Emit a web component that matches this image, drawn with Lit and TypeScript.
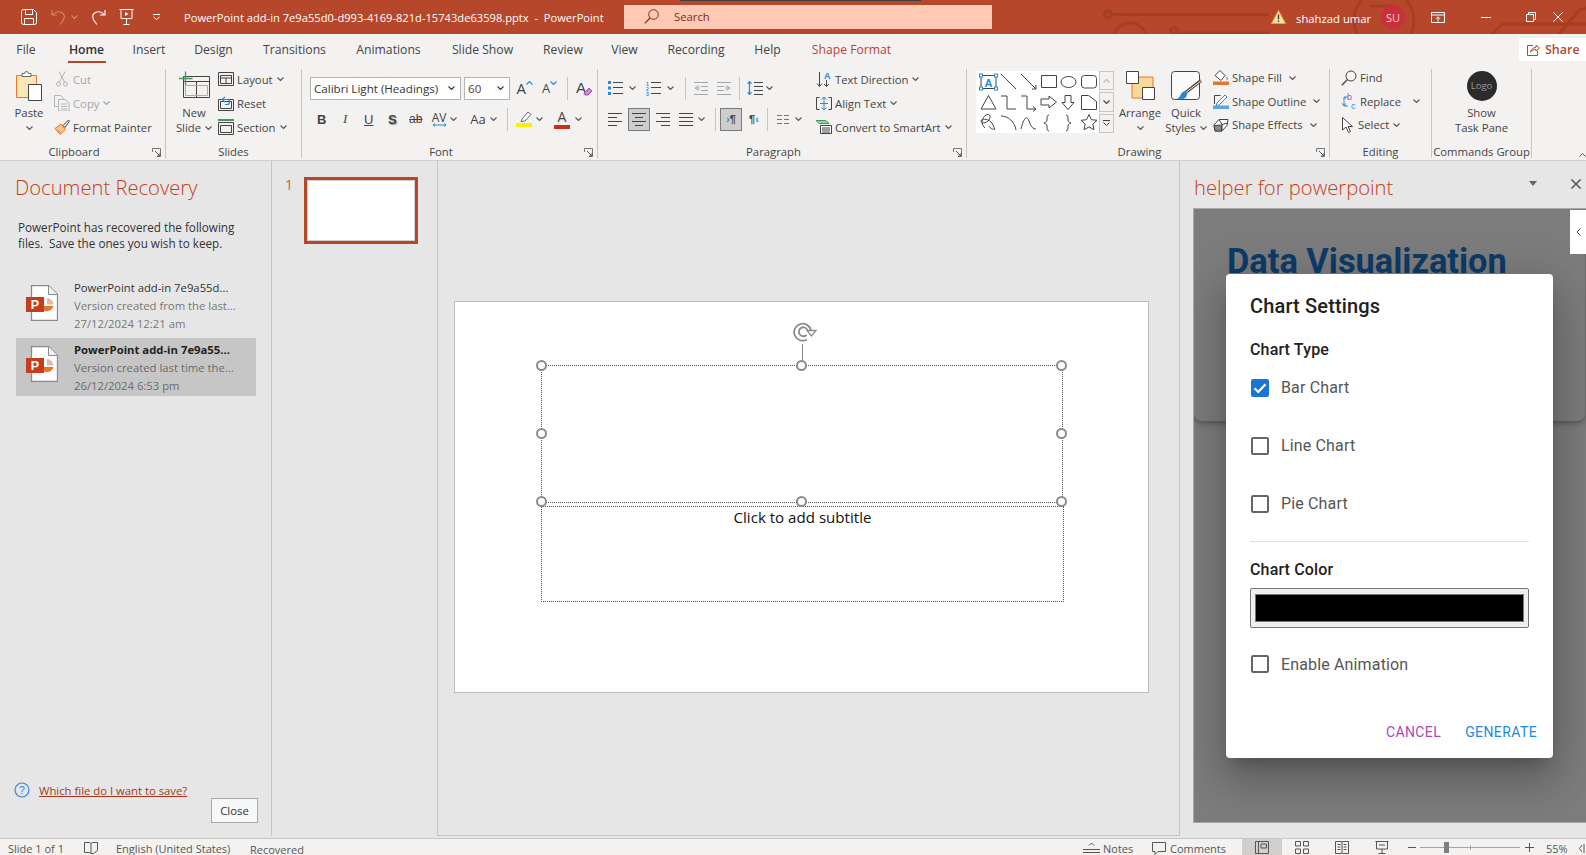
import { LitElement, css, html, svg } from 'lit'
import { customElement } from 'lit/decorators.js'

const ink = '#444'
const blue = '#2b88d8'
const orange = '#e3782b'

const ico = (w: number, h: number, body: unknown) =>
  html`<svg class="ico" width=${w} height=${h} viewBox="0 0 ${w} ${h}" fill="none">${body}</svg>`

const chev = (c = '#555') =>
  ico(7, 4, svg`<path d="M.5.5 3.5 3.5 6.5.5" stroke=${c} stroke-width="1.1"/>`)

const lines = (rows: [number, number, number][], c = ink) =>
  rows.map(([x1, x2, y]) => svg`<path d="M${x1} ${y}.5H${x2}" stroke=${c}/>`)

// title bar
const icSave = ico(16, 16, svg`<path d="M.5 2.5a2 2 0 0 1 2-2h10l3 3v10a2 2 0 0 1-2 2h-11a2 2 0 0 1-2-2zM4.5.5v5h7v-5M3.5 15.5v-6h9v6" stroke="#fff"/>`)
const icUndo = ico(15, 16, svg`<path d="M1 1v5h5M1.5 6C4 2.5 9 1.5 12 4.5c2.5 2.5 1.5 6-3 11" stroke="#d9856a" stroke-width="1.1"/>`)
const icRedo = ico(15, 16, svg`<path d="M14 1v5H9M13.5 6C11 2.5 6 1.5 3 4.5c-2.5 2.5-1.5 6 3 11" stroke="#fff" stroke-width="1.1"/>`)
const icPresent = ico(15, 16, svg`<path d="M.5.5h14M2 .5v9h11v-9M7.5 9.5v6M4.5 15.5h6" stroke="#fff"/><path d="M6 3l3.5 2L6 7z" fill="#fff"/>`)
const icCustom = ico(7, 6, svg`<path d="M0 .5h7M.5 3 3.5 5.5 6.5 3" stroke="#fff"/>`)
const icSearch = ico(15, 15, svg`<circle cx="9.5" cy="5.5" r="4.8" stroke="#8a2a14"/><path d="M6 9 .8 14.3" stroke="#8a2a14" stroke-width="1.2"/>`)
const icWarn = ico(15, 14, svg`<path d="M7.5.5 14.5 13.5H.5z" fill="#f9e3a0" stroke="#e8a33c"/><path d="M7.5 4.5v5" stroke="#444" stroke-width="1.4"/><path d="M7.5 10.5v1.6" stroke="#444" stroke-width="1.4"/>`)
const icDisplay = ico(14, 11, svg`<path d="M.5.5h13v10H.5zM.5 3h13M7 9.5V5M5 6.8 7 4.8l2 2" stroke="#fff"/>`)
const icMin = ico(10, 1, svg`<path d="M0 .5h10" stroke="#fff"/>`)
const icRestore = ico(10, 10, svg`<path d="M.5 2.5h7v7h-7zM2.5 2.5v-2h7v7h-2" stroke="#fff"/>`)
const icClose = ico(10, 10, svg`<path d="M.3.3l9.4 9.4M9.7.3.3 9.7" stroke="#fff"/>`)
const icShare = ico(13, 13, svg`<path d="M6 2.5H.5v10h10V8" stroke="#b7472a"/><path d="M3.5 9c.5-3 3-4.5 5.5-4.5V2L12.5 5 9 8V6.5c-2.5 0-4 .8-5.5 2.5z" stroke="#b7472a"/>`)

// clipboard
const icPaste = ico(28, 31, svg`<path d="M1.5 4.5h20v22h-20z" fill="#fbe6b8" stroke=${orange}/><path d="M7 4.5V2.5h2.5a2 2 0 0 1 4 0H16v3H7z" fill="#fff" stroke="#666"/><path d="M13.5 13.5h13v16h-13z" fill="#fff" stroke="#444"/>`)
const icCut = ico(16, 16, svg`<g stroke="#b3b3b3"><path d="M5 .5 10.5 11M11 .5 5.5 11"/><circle cx="4.5" cy="13" r="2"/><circle cx="11.5" cy="13" r="2"/></g>`)
const icCopy = ico(16, 16, svg`<g stroke="#b3b3b3"><path d="M.5.5h6l3 3v1M.5.5v11h3"/><path d="M4.5 4.5h7l3.5 3.5v8h-10.500z"/><path d="M7 9h6M7 11.5h6M7 14h6"/></g>`)
const icPainter = ico(16, 16, svg`<path d="M1 9.5 7 5l4.5 5.5L6 15.5z" fill="#f6c48f" stroke=${orange}/><path d="M3.5 11l3 3" stroke=${orange}/><path d="M9 6.5 14.5 1l1 1L11 8.5z" fill="#fff" stroke="#444"/>`)

// slides
const icNew = ico(31, 27, svg`<path d="M4.5 5.5h26v21h-26zM4.5 10.5h26M17.5 10.5v16" stroke="#444"/><path d="M6.5 14.5h22v10h-22z" stroke="#aaa"/><path d="M0 7.5h13.5M6.5 .5v13.5" stroke="#3e9a5a" stroke-width="1.3"/>`)
const icLayout = ico(16, 14, svg`<path d="M.5.5h15v13H.5zM2.5 3.5h11v8h-11zM2.5 6h11M8 6v5.5" stroke="#444"/>`)
const icReset = ico(16, 15, svg`<path d="M.5 3.5h15v11H.5zM2.5 5.5h11v7h-11z" stroke="#444"/><path d="M7 1 4 3.5 7 6M4 3.5h5a2.5 2.5 0 0 1 0 5H7" stroke=${blue} stroke-width="1.2"/>`)
const icSection = ico(16, 16, svg`<path d="M.5 3.5h15v12H.5zM2.5 6.5h11v7h-11z" stroke="#444"/><path d="M0 1h16" stroke="#3e9a5a" stroke-width="2"/>`)

// paragraph
const icBullets = ico(15, 14, svg`<g fill=${blue}><rect y="0" width="3" height="3"/><rect y="5.5" width="3" height="3"/><rect y="11" width="3" height="3"/></g>${lines([[5, 15, 1], [5, 15, 6], [5, 15, 12]])}`)
const icNumbers = ico(15, 15, svg`<text x="0" y="5" font-size="5" font-family="Liberation Sans" fill=${blue} font-weight="700">1</text><text x="0" y="10" font-size="5" font-family="Liberation Sans" fill=${blue} font-weight="700">2</text><text x="0" y="15" font-size="5" font-family="Liberation Sans" fill=${blue} font-weight="700">3</text>${lines([[5, 15, 1], [5, 15, 6], [5, 15, 12]])}`)
const icOut = ico(14, 13, svg`${lines([[0, 14, 0], [7, 14, 4], [7, 14, 8], [0, 14, 12]], '#a6a6a6')}<path d="M5 3.5 1 6l4 2.5M1 6h5" stroke="#a6a6a6"/>`)
const icIn = ico(14, 13, svg`${lines([[0, 14, 0], [0, 7, 4], [0, 7, 8], [0, 14, 12]], '#a6a6a6')}<path d="M9 3.5 13 6l-4 2.5M13 6H8" stroke="#a6a6a6"/>`)
const icSpacing = ico(16, 14, svg`<path d="M2.5 1v12M.5 3 2.5 .5l2 2.5M.5 11l2 2.5 2-2.5" stroke=${blue} stroke-width="1.2"/>${lines([[7, 16, 1], [7, 16, 5], [7, 16, 9], [7, 16, 13]])}`)
const icLeft = ico(14, 13, svg`${lines([[0, 14, 0], [0, 9, 4], [0, 14, 8], [0, 9, 12]])}`)
const icCenter = ico(14, 13, svg`${lines([[0, 14, 0], [3, 11, 4], [0, 14, 8], [3, 11, 12]])}`)
const icRight = ico(14, 13, svg`${lines([[0, 14, 0], [5, 14, 4], [0, 14, 8], [5, 14, 12]])}`)
const icJustify = ico(14, 13, svg`${lines([[0, 14, 0], [0, 14, 4], [0, 14, 8], [0, 14, 12]])}`)
const icCols = ico(12, 9, svg`${lines([[0, 5, 0], [7, 12, 0], [0, 5, 4], [7, 12, 4], [0, 5, 8], [7, 12, 8]], blue)}`)
const icDir = ico(16, 16, svg`<path d="M3.5 1v14M1 12.5l2.5 3 2.5-3M10.5 9v6.5M8 13l2.5 2.5L13 13" stroke="#444"/><text x="8" y="8" font-size="9" font-weight="700" font-family="Liberation Sans" fill=${blue}>A</text>`)
const icAlignText = ico(16, 15, svg`<path d="M3.5 1.5H.5v12h3M12.5 1.5h3v12h-3" stroke="#444"/><path d="M8 1v13M5.5 3.5 8 1l2.5 2.5M5.5 11.5 8 14l2.5-2.5M4 7.5h8" stroke=${blue}/>`)
const icSmart = ico(16, 14, svg`<path d="M0 .5h10l3 3H3z" fill="#9ccfa8" stroke="#3e9a5a"/><path d="M4.5 5.5h11v8h-11z" fill="#fff" stroke="#444"/><path d="M6 8h8M6 10h8M6 12h8" stroke="#444"/>`)

// drawing
const gallery = ico(123, 62, svg`
  <g stroke="#444" fill="none">
    <rect x="5" y="4.5" width="15" height="13" stroke=${ink}/>
    <path d="M25 3 40 18M45 3l15 15M60 18v-4M60 18h-4M65.5 4.5h15v12h-15z"/>
    <ellipse cx="92.5" cy="11" rx="7.5" ry="5.5"/>
    <rect x="105.5" y="4.5" width="15" height="12.5" rx="3"/>
    <path d="M12.5 24.5 20 38H5zM25 25h6v13h9M45 25h6v13h9M60 38l-3-2.5M60 38l-3 2.5M65 28h8v-3l7.5 6L73 37v-3h-8zM89 24.5h6v7h3l-6 7-6-7h3zM105.5 24.500h7l8 6v8h-15z"/>
    <path d="M9 57c-4-3-4-10 1-13 4-2 6 2 2 6-2 2-7 3-7 0 0-2 6-3 10 1 2 2 3 6 4 7-2 1-5-1-6-3M25 45c7 0 14 6 15 14M45 58c3-12 6-14 8-8s4 8 7 8M73 44c-2 0-2 2-2 5s-3 2-3 3 3 0 3 3 0 5 2 5M90 44c2 0 2 2 2 5s3 2 3 3-3 0-3 3 0 5-2 5" />
    <path d="M113 43.5l2.4 5.2 5.6.6-4.2 3.8 1.2 5.6-5-2.8-5 2.8 1.2-5.6-4.2-3.8 5.6-.6z"/>
  </g>
  <g fill="#fff" stroke=${blue}>
    <rect x="3.5" y="3" width="3" height="3"/><rect x="18.5" y="3" width="3" height="3"/><rect x="3.5" y="16" width="3" height="3"/><rect x="18.5" y="16" width="3" height="3"/>
  </g>
  <text x="8.5" y="15.5" font-size="11" font-weight="700" font-family="Liberation Sans" fill=${blue}>A</text>
`)
const scUp = ico(7, 4, svg`<path d="M.5 3.5 3.5.5l3 3" stroke="#bbb" stroke-width="1.2"/>`)
const scMore = ico(7, 6, svg`<path d="M0 .5h7M.5 2.5l3 3 3-3" stroke="#444"/>`)
const icArrange = ico(29, 29, svg`<path d="M6 6h21v21H6z" fill="#f6d998" stroke=${orange}/><path d="M.5.5h12v12H.5zM16.5 16.5h12v12h-12z" fill="#fff" stroke="#444"/>`)
const icQuick = ico(31, 31, svg`<rect x=".5" y=".5" width="28" height="28" rx="3" fill="#fafafa" stroke="#444"/><path d="M30 9.5 14 22" stroke="#444" stroke-width="3"/><path d="M30.5 9.5 14 22" stroke="#f3f2f1"/><path d="M14 20c-3 .5-4 3-5 5-1 2-2.5 2.5-3 3 4 1.5 10 0 10-5z" fill=${blue}/>`)
const icFill = ico(16, 15, svg`<path d="M2 5.5 7 .5l5 5-4 5z" fill="#fff" stroke="#444"/><path d="M13.5 7c1 1.5 1.5 2.5 0 3" stroke=${blue}/><rect y="11.5" width="16" height="3.5" fill=${orange}/>`)
const icOutline = ico(16, 15, svg`<path d="M1.5 10V1.5h6" stroke="#444"/><path d="M4 9l8-8 2 2-8 8-3 .5z" fill="#fff" stroke=${blue}/><rect y="11.5" width="16" height="3.5" fill="#5ca5dd"/>`)
const icEffects = ico(16, 14, svg`<path d="M1 7 6 1.5h9l-1 6L9 13H2z" fill="#fff" stroke="#444"/><path d="M6 1.5 9 6.5 15 5M9 6.5 9 13" stroke="#444"/><path d="M1 7.5 8.5 7 8.5 13H2z" fill="#8a8a8a" stroke="#444"/>`)
const icFind = ico(16, 16, svg`<circle cx="10" cy="6" r="5" stroke="#444"/><path d="M6.5 9.5.8 15.2" stroke="#444" stroke-width="1.3"/>`)
const icReplace = ico(16, 17, svg`<text x="6" y="7" font-size="9" fill="#a24ec1" font-family="Liberation Sans">b</text><text x="10" y="16" font-size="9" fill=${blue} font-family="Liberation Sans">c</text><path d="M7 4H3v9M7 13H3M1 10.5 3 13l2-2.5M5 6 3 4" stroke=${blue}/>`)
const icSelect = ico(14, 16, svg`<path d="M1.5 .5v12.500l3.500-3 2.500 5.500 2-1-2.500-5h4.500z" fill="#fff" stroke="#444"/>`)
const launch = ico(9, 9, svg`<path d="M.5 4V.5h8v8H5" stroke="#777"/><path d="M3 3l5 5M8 5v3H5" stroke="#555"/>`)

// panes and status
const pptFile = ico(32, 36, svg`
  <path d="M5.5.5h17l9 9v26h-26z" fill="#fff" stroke="#8a8a8a" stroke-width="1.3"/>
  <path d="M22.5.5v9h9" fill="#f0f0f0" stroke="#8a8a8a"/>
  <path d="M21 13a7 7 0 0 1 6.5 6.5H21z" fill="#e8b8a4"/><path d="M27.5 21a7 7 0 0 1-13.5 0z" fill=${orange}/>
  <rect y="12" width="18" height="15" fill="#c43e1c"/>
  <text x="9" y="24" font-size="12.5" font-weight="700" text-anchor="middle" fill="#fff" font-family="Liberation Sans">P</text>
`)
const icHelp = ico(16, 16, svg`<circle cx="8" cy="8" r="7" stroke=${blue} stroke-width="1.2"/><text x="8" y="12" font-size="10.5" text-anchor="middle" fill=${blue} font-family="Liberation Sans">?</text>`)
const icBook = ico(14, 12, svg`<path d="M.5.5h5l1.5 1 1.5-1h5v8l-4 3H7l-1.500-1H.5zM7 1.5V11" stroke="#555"/>`)
const icNotes = ico(17, 12, svg`<path d="M0 7.5h17M0 10.5h17" stroke="#555"/><path d="M6 3.5 8.5 1 11 3.5" stroke="#555"/>`)
const icComment = ico(14, 13, svg`<path d="M.5.5h13v9H6l-3 3v-3H.5z" stroke="#555"/>`)
const icNormal = ico(14, 13, svg`<path d="M.5.5h13v12H.5zM3.5.5v12M6 3h5.500v4H6z" stroke="#555"/>`)
const icGrid = ico(14, 13, svg`<path d="M.5.5h5v4.500h-5zM8.5.5h5v4.500h-5zM.5 8h5v4.500h-5zM8.5 8h5v4.500h-5z" stroke="#555"/>`)
const icRead = ico(14, 13, svg`<path d="M.5.5h6l.5 1 .5-1h6v12h-6l-.5-1-.5 1h-6zM7 1.5v10M2.5 3.5h3M2.5 6h3M2.5 8.5h3M8.5 3.5h3M8.5 6h3M8.5 8.5h3" stroke="#555"/>`)
const icShow = ico(14, 13, svg`<path d="M.5.5h13M1.5.5v7.500h11V.5M7 8v4.500M3.5 12.5h7M4 4h6" stroke="#555"/>`)
const icCheck = ico(18, 18, svg`<path d="M3.5 9.2 7.3 13l7.2-7.8" stroke="#fff" stroke-width="2.2"/>`)
const icRotate = ico(24, 22, svg`<path d="M14 18.5a8.500 8.500 0 1 1 4-9" stroke="#8c8c8c" stroke-width="1.8"/><path d="M13.5 14a4.500 4.500 0 1 1 1-5" stroke="#8c8c8c" stroke-width="1.8"/><path d="M14 9.5h9L18.5 15z" fill="#fff" stroke="#8c8c8c" stroke-width="1.3"/>`)

@customElement('app-root')
export class AppRoot extends LitElement {
  static styles = css`
    :host {
      display: block;
      position: relative;
      width: 1586px;
      height: 855px;
      overflow: hidden;
      background: #e6e6e6;
      font-family: 'Open Sans', 'Noto Sans', sans-serif;
      font-size: 11.3px;
      color: #444;
    }
    .ico { display: block; flex: none; }

    /* title bar */
    .title {
      position: relative;
      height: 34px;
      background: #b7472a;
      color: #fff;
      display: flex;
      align-items: center;
      white-space: nowrap;
    }
    .circuit { position: absolute; inset: 0; }
    .title > div, .title > span { position: relative; }
    .strip { position: absolute !important; left: 680px; top: 0; width: 241px; height: 1px; background: #3c3c3c; }
    .qat { display: flex; align-items: center; margin-left: 21px; width: 163px; }
    .qat .undo { margin-left: 14px; }
    .qat .uc { margin-left: 5px; }
    .qat .redo { margin-left: 13px; }
    .qat .pres { margin-left: 13px; }
    .qat .cust { margin-left: 19px; }
    .doc { width: 440px; font-size: 11.15px; }
    .search {
      width: 368px;
      height: 24px;
      background: #ffc9b3;
      color: #7d2b18;
      display: flex;
      align-items: center;
      gap: 15px;
      padding-left: 20px;
      padding-bottom: 1px;
      box-sizing: border-box;
    }
    .who { position: absolute !important; right: 0; top: 0; height: 34px; display: flex; align-items: center; }
    .who .name { margin: 3px 0 0 10px; width: 85px; }
    .avatar {
      width: 24px; height: 24px; border-radius: 50%;
      background: #c9303c; color: #f6d7d2;
      display: flex; align-items: center; justify-content: center;
      font-size: 11px; margin-right: 10px;
    }
    .who .wb { width: 45px; display: flex; justify-content: center; }
    .who .wb.first { margin-right: 3px; }
    .who .wb:last-child { width: 29px; justify-content: flex-start; margin-right: 4px; }

    /* ribbon */
    .ribbon { height: 127px; background: #f3f2f1; border-bottom: 1px solid #d2d0ce; box-sizing: border-box; position: relative; }
    .tabs { height: 28px; display: flex; justify-content: space-between; }
    .tablist {
      display: grid;
      grid-template-columns: 52px 69px 56px 73px 89px 99px 89px 72px 51px 92px 51px 117px;
      font-size: 12.2px;
    }
    .tablist span { display: flex; align-items: center; justify-content: center; padding-top: 3px; position: relative; }
    .tablist .on { font-weight: 600; color: #333; }
    .tablist .on::after { content: ''; position: absolute; left: 16px; right: 15px; bottom: -1px; height: 2.5px; background: #b7472a; }
    .tablist .ctx { color: #b7472a; }
    .share {
      margin-top: 4px; width: 67px; height: 23px; background: #fff;
      display: flex; align-items: center; gap: 5px; padding-left: 8px; box-sizing: border-box;
      color: #b7472a; font-size: 12.5px; font-weight: 600;
    }
    .groups { display: flex; margin-top: 7px; }
    .group { height: 89px; border-right: 1px solid #c8c6c4; box-sizing: border-box; position: relative; flex: none; }
    .g-clip { width: 166px; } .g-slides { width: 136px; } .g-font { width: 296px; }
    .g-para { width: 369px; } .g-draw { width: 363px; } .g-edit { width: 102px; } .g-cmd { width: 100px; }
    .body { height: 74px; display: flex; margin-top: -2px; }
    .label { text-align: center; line-height: 22px; white-space: nowrap; position: relative; color: #444; }
    .label.ln { padding-right: 17px; }
    .launch { position: absolute; right: 4px; top: 7px; }
    .col { display: flex; flex-direction: column; }
    .row { height: 24px; display: flex; align-items: center; gap: 3px; white-space: nowrap; }
    .row .cv { margin-left: 1px; }
    .off { color: #a6a6a6; }
    .large { display: flex; flex-direction: column; align-items: center; flex: none; line-height: 15.5px; white-space: nowrap; }
    .large .top { height: 37.5px; padding-top: 4px; box-sizing: border-box; }
    .large .cvline { height: 15.5px; display: flex; align-items: center; gap: 4px; }
    .clip-l { width: 32px; margin-left: 13px; }
    .clip-s { margin-left: 9px; }
    .new-l { width: 44px; margin-left: 6px; }
    .slides-s { margin-left: 2px; }

    /* font + paragraph two line blocks */
    .tworows { padding-top: 9.5px; display: flex; flex-direction: column; gap: 7.5px; }
    .r { display: flex; align-items: center; height: 24px; white-space: nowrap; }
    .r.first { height: 23px; }
    .combo {
      height: 23px; background: #fff; border: 1px solid #b4b4b4; box-sizing: border-box;
      display: flex; align-items: center; justify-content: space-between; padding: 0 5px 0 3px; color: #333; font-size: 11.6px;
    }
    .c-name { width: 151px; margin-left: 8px; }
    .c-size { width: 46px; margin-left: 3px; color: #5a4030; }
    .sep { width: 1px; height: 23px; background: #c8c6c4; flex: none; }
    .a { font-size: 15px; color: #444; display: flex; align-items: flex-start; line-height: 20px; }
    .a.small { font-size: 13px; align-items: flex-start; }
    .caret { margin-top: 3px; }
    .fb { width: 23.5px; text-align: center; font-size: 13px; flex: none; font-family: 'Liberation Sans', sans-serif; }
    .fb.b { font-weight: 700; }
    .fb.i { font-style: italic; font-family: 'Liberation Serif', serif; }
    .fb.u { text-decoration: underline; }
    .fb.s { font-weight: 700; text-shadow: 1px 1px 1px #999; }
    .fb.ab { text-decoration: line-through; font-size: 12px; }
    .av { width: 33px; display: flex; align-items: center; justify-content: center; gap: 3px; flex: none; }
    .av .t { font-size: 12px; display: flex; flex-direction: column; align-items: center; line-height: 11px; }
    .aa { width: 34px; margin-left: 6px; display: flex; align-items: center; justify-content: center; gap: 4px; flex: none; font-size: 13px; }
    .colorbtn { width: 16px; height: 20px; display: flex; flex-direction: column; align-items: center; }
    .colorbtn i { display: block; width: 16px; height: 4px; flex: none; }
    .colorbtn .yellow { background: #ffee00; }
    .colorbtn .red { background: #c9301a; }
    .colorbtn span { font-size: 14px; line-height: 16px; }
    .hi { width: 22px; height: 23px; background: #cdcdcd; border: 1px solid #7a7a7a; box-sizing: border-box; display: flex; align-items: center; justify-content: center; flex: none; }
    .pil { font-size: 11px; font-weight: 700; font-family: 'Liberation Sans', sans-serif; white-space: nowrap; }
    .pil b { color: #2b88d8; }
    .cv6 { margin-left: 6px; } .cv3 { margin-left: 3px; } .cv5 { margin-left: 5px; }
    .ml4 { margin-left: 4px; } .ml5 { margin-left: 5.5px; } .ml6 { margin-left: 6.5px; } .ml7 { margin-left: 7px; }
    .ml8 { margin-left: 8px; } .ml9 { margin-left: 9px; } .ml10 { margin-left: 10px; } .ml11 { margin-left: 11px; }
    .para-l { width: 218px; flex: none; }
    .draw-gal { margin: 4px 0 0 9px; display: flex; flex: none; height: 62px; }
    .gal { width: 123px; height: 62px; background: #fff; }
    .scroll { width: 15px; display: flex; flex-direction: column; gap: 2px; }
    .scroll div { flex: 1; background: #f3f2f1; border: 1px solid #c8c6c4; display: flex; align-items: center; justify-content: center; }
    .arr-l { width: 46px; margin-left: 3px; }
    .qs-l { width: 46px; }
    .shape-s { margin-left: 4px; margin-top: -1px; }
    .shape-s .row { height: 23.5px; }
    .shape-s .cv { margin-left: 4px; }
    .edit-s { margin-left: 11px; margin-top: -1px; }
    .edit-s .row { height: 23.5px; }
    .cv9 { margin-left: 9px !important; }
    .cmd-l { width: 99px; }
    .logo {
      width: 30px; height: 30px; border-radius: 50%; background: #2b2b2b; color: #999;
      font-size: 9.5px; display: flex; align-items: center; justify-content: center;
    }
    .expand { position: absolute; right: 0; bottom: 3px; }

    /* main area */
    .main { height: 677px; display: flex; }
    .recover { width: 272px; height: 675px; border-right: 1px solid #c8c6c4; box-sizing: border-box; display: flex; flex-direction: column; flex: none; }
    .recover h2, .pane h2 {
      margin: 0; font-weight: 300; font-size: 20.2px; color: #c43e1c; line-height: 27px; white-space: nowrap;
    }
    .recover h2 { margin: 13px 0 0 15px; }
    .intro { margin: 18px 0 0 18px; line-height: 16px; color: #333; width: 226px; font-size: 11.7px; }
    .files { margin: 25px 15px 0 16px; }
    .file { height: 58px; display: flex; padding: 3px 0 0 10px; box-sizing: border-box; gap: 16px; }
    .file.sel { background: #c6c6c6; margin-top: 4px; }
    .file .meta { display: flex; flex-direction: column; line-height: 18px; white-space: nowrap; }
    .file .n { color: #333; }
    .file.sel .n { font-weight: 700; color: #222; }
    .file .d { color: #777; }
    .file.sel .d { color: #6a6a6a; }
    .file > svg { margin-top: 6px; }
    .file.sel > svg { margin-top: 5px; }
    .helpline { margin: auto 0 0 14px; display: flex; align-items: center; gap: 9px; }
    .helpline a { color: #a4371c; text-decoration: underline; }
    .closebtn {
      align-self: flex-end; width: 47px; height: 25px; margin: 0 13px 13px 0;
      background: #f7f7f7; border: 1px solid #aaa; box-sizing: border-box;
      display: flex; align-items: center; justify-content: center; color: #333;
    }
    .thumbs { width: 166px; height: 675px; border-right: 1px solid #c8c6c4; box-sizing: border-box; display: flex; padding: 16px 0 0 13px; flex: none; }
    .thumbs .num { color: #d2601a; font-size: 14px; width: 19px; line-height: 15px; }
    .thumb { width: 114px; height: 67px; border: 3px solid #b7472a; background: #fff; box-sizing: border-box; box-shadow: inset 0 0 0 1px #d0d0d0; }
    .canvas { width: 742px; height: 675px; border-right: 1px solid #c8c6c4; border-bottom: 1px solid #c8c6c4; box-sizing: border-box; padding: 140px 0 0 16px; flex: none; }
    .slide { width: 695px; height: 392px; background: #fff; border: 1px solid #bdbdbd; box-sizing: border-box; position: relative; }
    .ph { position: absolute; border: 1px dotted #555; box-sizing: border-box; }
    .ph.t { left: 86px; top: 63px; width: 522px; height: 138px; }
    .ph.s { left: 86px; top: 204px; width: 523px; height: 96px; text-align: center; color: #111; font-size: 15.1px; line-height: 20px; }
    .hd { position: absolute; width: 11px; height: 11px; border-radius: 50%; background: #fff; border: 2px solid #8c8c8c; box-sizing: border-box; margin: -6px 0 0 -6px; }
    .x0 { left: 0; } .x1 { left: 50%; } .x2 { left: 100%; }
    .y0 { top: 0; } .y1 { top: 50%; } .y2 { top: 100%; }
    .rot { position: absolute; left: 338px; top: 19px; }
    .stem { position: absolute; left: 260px; top: -22px; width: 1px; height: 18px; background: #8c8c8c; }

    /* task pane */
    .pane { flex: 1; display: flex; flex-direction: column; min-width: 0; }
    .pane-h { height: 47px; display: flex; align-items: center; padding: 0 0 0 14px; position: relative; }
    .pane-h h2 { padding-top: 6px; }
    .tri { margin-left: auto; margin-right: 34px; margin-top: -2px; width: 0; height: 0; border: 4.5px solid transparent; border-top: 5px solid #666; border-bottom: 0; }
    .pane-x { margin-right: 5px; margin-top: -2px; }
    .host {
      height: 615px; margin-left: 13px; position: relative; overflow: hidden; box-sizing: border-box;
      background: #f8f8f8; border: 1px solid #a8a8a8; border-right: 0; font-family: Roboto, sans-serif;
    }
    .card { height: 212px; border-radius: 0 0 8px 8px; box-shadow: 0 2px 6px rgba(0, 0, 0, 0.35); margin: 0 1px 0 0; padding: 31px 0 0 33px; box-sizing: border-box; background: #f8f8f8; }
    .card h1 { margin: 0; font-size: 34.4px; font-weight: 700; color: #1976d2; line-height: 42px; white-space: nowrap; }
    .backdrop { position: absolute; inset: 0; background: rgba(0, 0, 0, 0.5); }
    .toggle { position: absolute; right: 0; top: 1px; width: 16px; height: 44px; background: #fff; display: flex; align-items: center; justify-content: center; }
    .dialog {
      position: absolute; left: 32px; top: 65px; width: 327px; height: 484px; background: #fff; border-radius: 4px;
      box-shadow: 0 11px 15px -7px rgba(0, 0, 0, 0.2), 0 24px 38px 3px rgba(0, 0, 0, 0.14), 0 9px 46px 8px rgba(0, 0, 0, 0.12);
      display: flex; flex-direction: column; color: #212121;
    }
    .d-title { font-size: 20px; font-weight: 500; line-height: 32px; padding: 16px 24px 0; letter-spacing: 0.15px; }
    .d-body { padding: 0 24px; flex: 1; }
    .d-label { font-size: 16px; font-weight: 500; line-height: 24px; margin-top: 16px; letter-spacing: 0.15px; }
    .d-group { margin-top: 4.5px; }
    .d-row { height: 42px; display: flex; align-items: center; gap: 12px; margin-bottom: 16.2px; font-size: 16px; color: #555; padding-left: 1px; letter-spacing: 0.15px; }
    .box { width: 18px; height: 18px; border: 2px solid #666; border-radius: 2px; box-sizing: border-box; flex: none; }
    .box.on { background: #1976d2; border: 0; }
    .d-sep { height: 1px; background: #e0e0e0; margin-top: 6px; }
    .swatch { height: 40px; margin-top: 6px; border: 1px solid #767676; border-radius: 2px; background: #efefef; padding: 5px 4px; box-sizing: border-box; }
    .swatch div { height: 100%; background: #000; border: 1px solid #777; box-sizing: border-box; }
    .d-row.anim { margin-top: 15px; margin-bottom: 0; }
    .d-act { display: flex; justify-content: flex-end; gap: 8px; padding: 8px; }
    .d-act span { height: 36px; padding: 0 8px; display: flex; align-items: center; font-size: 14px; letter-spacing: 0.4px; }
    .d-act .cancel { color: #ab47bc; }
    .d-act .gen { color: #1e88e5; }

    /* status bar */
    .status {
      height: 17px; background: #f3f2f1; border-top: 1px solid #c8c6c4; box-sizing: border-box;
      display: flex; align-items: center; white-space: nowrap; font-size: 11px; position: relative; color: #555; padding-top: 2px;
    }
    .status > * { flex: none; }
    .st1 { margin-left: 8px; width: 76px; }
    .st2 { width: 32px; }
    .st3 { width: 134px; }
    .st4 { width: 833px; padding-top: 2px; }
    .nb { display: flex; align-items: center; gap: 3px; width: 69px; }
    .nb.cm { width: 90px; gap: 4px; }
    .vw { width: 40px; height: 16px; display: flex; align-items: center; justify-content: center; margin-top: -2px; }
    .vw.on { background: #d0cfce; }
    .zoomer { display: flex; align-items: center; margin-left: 6px; margin-top: -1px; }
    .track { width: 100px; height: 1px; background: #a6a6a6; position: relative; margin: 0 5px 0 4px; }
    .track::before { content: ''; position: absolute; left: 24px; top: -5px; width: 5px; height: 11px; background: #808080; }
    .track::after { content: ''; position: absolute; left: 50px; top: -2px; width: 1px; height: 5px; background: #a6a6a6; }
    .pct { margin-left: 12px; }
    .end { margin-left: 11px; }
  `

  private small(icon: unknown, label: string, cv = false, off = false) {
    return html`<div class="row ${off ? 'off' : ''}">
      ${icon}<span>${label}</span>${cv ? html`<span class="cv">${chev(off ? '#a6a6a6' : '#555')}</span>` : ''}
    </div>`
  }

  private renderTitle() {
    return html`<div class="title">
      <svg class="circuit" width="1586" height="34" fill="none" stroke="#a53e23" stroke-width="3">
        <circle cx="1108" cy="14.5" r="3.5" />
        <path d="M1111 14.5h158M1172 33h98" />
        <circle cx="1130" cy="40" r="17" />
        <circle cx="1174" cy="31" r="3.5" />
        <circle cx="1384" cy="20" r="30" />
        <path d="M1370 6h22l-8 18M1492 34l10-10h84M1559 34l20-24 7-2" />
      </svg>
      <div class="strip"></div>
      <div class="qat">
        ${icSave}<span class="undo">${icUndo}</span><span class="uc">${chev('#d9856a')}</span>
        <span class="redo">${icRedo}</span><span class="pres">${icPresent}</span><span class="cust">${icCustom}</span>
      </div>
      <div class="doc">PowerPoint add-in 7e9a55d0-d993-4169-821d-15743de63598.pptx&nbsp; - &nbsp;PowerPoint</div>
      <div class="search">${icSearch}<span>Search</span></div>
      <div class="who">
        ${icWarn}<span class="name">shahzad umar</span>
        <div class="avatar">SU</div>
        <span class="wb first">${icDisplay}</span><span class="wb">${icMin}</span><span class="wb">${icRestore}</span>
        <span class="wb">${icClose}</span>
      </div>
    </div>`
  }

  private renderTabs() {
    const names = ['File', 'Home', 'Insert', 'Design', 'Transitions', 'Animations', 'Slide Show', 'Review', 'View', 'Recording', 'Help']
    return html`<div class="tabs">
      <div class="tablist">
        ${names.map((n) => html`<span class=${n === 'Home' ? 'on' : ''}>${n}</span>`)}
        <span class="ctx">Shape Format</span>
      </div>
      <div class="share">${icShare}<span>Share</span></div>
    </div>`
  }

  private renderClipboard() {
    return html`<div class="group g-clip">
      <div class="body">
        <div class="large clip-l">
          <div class="top">${icPaste}</div>
          <span>Paste</span><div class="cvline">${chev()}</div>
        </div>
        <div class="col clip-s">
          ${this.small(icCut, 'Cut', false, true)}
          ${this.small(icCopy, 'Copy', true, true)}
          ${this.small(icPainter, 'Format Painter')}
        </div>
      </div>
      <div class="label ln">Clipboard<span class="launch">${launch}</span></div>
    </div>`
  }

  private renderSlides() {
    return html`<div class="group g-slides">
      <div class="body">
        <div class="large new-l">
          <div class="top">${icNew}</div>
          <span>New</span><div class="cvline">Slide ${chev()}</div>
        </div>
        <div class="col slides-s">
          ${this.small(icLayout, 'Layout', true)}
          ${this.small(icReset, 'Reset')}
          ${this.small(icSection, 'Section', true)}
        </div>
      </div>
      <div class="label">Slides</div>
    </div>`
  }

  private renderFont() {
    return html`<div class="group g-font">
      <div class="body">
        <div class="tworows">
          <div class="r first">
            <div class="combo c-name"><span>Calibri Light (Headings)</span>${chev('#333')}</div>
            <div class="combo c-size"><span>60</span>${chev('#333')}</div>
            <span class="a ml6">A<span class="caret">${ico(7, 4, svg`<path d="M.5 3.5 3.5.5l3 3" stroke=${blue} stroke-width="1.2"/>`)}</span></span>
            <span class="a small ml9">A<span class="caret">${ico(7, 4, svg`<path d="M.5.5 3.5 3.5l3-3" stroke=${blue} stroke-width="1.2"/>`)}</span></span>
            <span class="sep ml10"></span>
            <span class="ml8">${ico(16, 17, svg`<text x="0" y="13" font-size="15" fill="#444" font-family="Liberation Sans">A</text><path d="M8 13l5-5 3 3-4 4H9z" fill="#c58ad6" stroke="#9a4fb8"/>`)}</span>
          </div>
          <div class="r">
            <span class="fb b ml8">B</span><span class="fb i">I</span><span class="fb u">U</span>
            <span class="fb s">S</span><span class="fb ab">ab</span>
            <div class="av"><span class="t">AV${ico(15, 4, svg`<path d="M1 2h13M3 .5 1 2l2 1.5M12 .5 14 2l-2 1.5" stroke=${blue}/>`)}</span>${chev()}</div>
            <div class="aa"><span>Aa</span>${chev()}</div>
            <span class="sep ml6"></span>
            <span class="colorbtn ml8">${ico(16, 14, svg`<path d="M6 10 12 3l3 2.5-6 6.5-4 .5z" fill="#fff" stroke="#666"/>`)}<i class="yellow"></i></span>
            <span class="ml4">${chev()}</span>
            <span class="colorbtn ml11"><span>A</span><i class="red"></i></span>
            <span class="cv5">${chev()}</span>
          </div>
        </div>
      </div>
      <div class="label ln">Font<span class="launch">${launch}</span></div>
    </div>`
  }

  private renderParagraph() {
    return html`<div class="group g-para">
      <div class="body">
        <div class="tworows para-l">
          <div class="r first">
            <span class="ml10">${icBullets}</span><span class="cv6">${chev()}</span>
            <span class="ml10">${icNumbers}</span><span class="cv6">${chev()}</span>
            <span class="sep ml11"></span>
            <span class="ml8">${icOut}</span><span class="ml9">${icIn}</span>
            <span class="sep ml8"></span>
            <span class="ml7">${icSpacing}</span><span class="cv3">${chev()}</span>
          </div>
          <div class="r">
            <span class="ml10">${icLeft}</span>
            <span class="hi ml5">${icCenter}</span>
            <span class="ml6">${icRight}</span>
            <span class="ml9">${icJustify}</span><span class="cv5">${chev()}</span>
            <span class="sep ml10"></span>
            <span class="hi ml4"><span class="pil"><b>›</b>¶</span></span>
            <span class="pil ml7">¶<b>‹</b></span>
            <span class="sep ml8"></span>
            <span class="ml9">${icCols}</span><span class="cv6">${chev()}</span>
          </div>
        </div>
        <div class="col">
          ${this.small(icDir, 'Text Direction', true)}
          ${this.small(icAlignText, 'Align Text', true)}
          ${this.small(icSmart, 'Convert to SmartArt', true)}
        </div>
      </div>
      <div class="label ln">Paragraph<span class="launch">${launch}</span></div>
    </div>`
  }

  private renderDrawing() {
    return html`<div class="group g-draw">
      <div class="body">
        <div class="draw-gal">
          <div class="gal">${gallery}</div>
          <div class="scroll"><div>${scUp}</div><div>${chev('#444')}</div><div>${scMore}</div></div>
        </div>
        <div class="large arr-l">
          <div class="top">${icArrange}</div>
          <span>Arrange</span><div class="cvline">${chev()}</div>
        </div>
        <div class="large qs-l">
          <div class="top">${icQuick}</div>
          <span>Quick</span><div class="cvline">Styles ${chev()}</div>
        </div>
        <div class="col shape-s">
          ${this.small(icFill, 'Shape Fill', true)}
          ${this.small(icOutline, 'Shape Outline', true)}
          ${this.small(icEffects, 'Shape Effects', true)}
        </div>
      </div>
      <div class="label ln">Drawing<span class="launch">${launch}</span></div>
    </div>`
  }

  private renderEditing() {
    return html`<div class="group g-edit">
      <div class="body">
        <div class="col edit-s">
          ${this.small(icFind, 'Find')}
          <div class="row">${icReplace}<span>Replace</span><span class="cv9">${chev()}</span></div>
          ${this.small(icSelect, 'Select', true)}
        </div>
      </div>
      <div class="label">Editing</div>
    </div>`
  }

  private renderCommands() {
    return html`<div class="group g-cmd">
      <div class="body">
        <div class="large cmd-l">
          <div class="top"><div class="logo">Logo</div></div>
          <span>Show</span><span>Task Pane</span>
        </div>
      </div>
      <div class="label">Commands Group</div>
    </div>`
  }

  private renderRecovery() {
    return html`<div class="recover">
      <h2>Document Recovery</h2>
      <div class="intro">PowerPoint has recovered the following files.&nbsp; Save the ones you wish to keep.</div>
      <div class="files">
        <div class="file">
          ${pptFile}
          <div class="meta">
            <span class="n">PowerPoint add-in 7e9a55d...</span>
            <span class="d">Version created from the last...</span>
            <span class="d">27/12/2024 12:21 am</span>
          </div>
        </div>
        <div class="file sel">
          ${pptFile}
          <div class="meta">
            <span class="n">PowerPoint add-in 7e9a55...</span>
            <span class="d">Version created last time the...</span>
            <span class="d">26/12/2024 6:53 pm</span>
          </div>
        </div>
      </div>
      <div class="helpline">${icHelp}<a>Which file do I want to save?</a></div>
      <div class="closebtn">Close</div>
    </div>`
  }

  private renderSlide() {
    const handles = ['x0 y0', 'x1 y0', 'x2 y0', 'x0 y1', 'x2 y1', 'x0 y2', 'x1 y2', 'x2 y2']
    return html`<div class="canvas">
      <div class="slide">
        <div class="ph s">Click to add subtitle</div>
        <div class="ph t">
          <div class="stem"></div>
          ${handles.map((h) => html`<div class="hd ${h}"></div>`)}
        </div>
        <div class="rot">${icRotate}</div>
      </div>
    </div>`
  }

  private renderPane() {
    return html`<div class="pane">
      <div class="pane-h">
        <h2>helper for powerpoint</h2>
        <span class="tri"></span>
        <span class="pane-x">${ico(10, 10, svg`<path d="M.5.5l9 9M9.5.5l-9 9" stroke="#555" stroke-width="1.5"/>`)}</span>
      </div>
      <div class="host">
        <div class="card"><h1>Data Visualization</h1></div>
        <div class="backdrop"></div>
        <div class="toggle">${ico(5, 8, svg`<path d="M4.5.5 1 4l3.5 3.5" stroke="#444"/>`)}</div>
        <div class="dialog">
          <div class="d-title">Chart Settings</div>
          <div class="d-body">
            <div class="d-label">Chart Type</div>
            <div class="d-group">
              <div class="d-row"><span class="box on">${icCheck}</span>Bar Chart</div>
              <div class="d-row"><span class="box"></span>Line Chart</div>
              <div class="d-row"><span class="box"></span>Pie Chart</div>
            </div>
            <div class="d-sep"></div>
            <div class="d-label">Chart Color</div>
            <div class="swatch"><div></div></div>
            <div class="d-row anim"><span class="box"></span>Enable Animation</div>
          </div>
          <div class="d-act"><span class="cancel">CANCEL</span><span class="gen">GENERATE</span></div>
        </div>
      </div>
    </div>`
  }

  private renderStatus() {
    return html`<div class="status">
      <span class="st1">Slide 1 of 1</span>
      <span class="st2">${icBook}</span>
      <span class="st3">English (United States)</span>
      <span class="st4">Recovered</span>
      <span class="nb">${icNotes}Notes</span>
      <span class="nb cm">${icComment}Comments</span>
      <span class="vw on">${icNormal}</span><span class="vw">${icGrid}</span><span class="vw">${icRead}</span><span class="vw">${icShow}</span>
      <span class="zoomer">${ico(8, 1, svg`<path d="M0 .5h8" stroke="#555"/>`)}<span class="track"></span>${ico(9, 9, svg`<path d="M0 4.5h9M4.5 0v9" stroke="#555"/>`)}</span>
      <span class="pct">55%</span>
      <span class="end">${ico(7, 9, svg`<path d="M3 1 .5 4.5 3 8M5 0v9" stroke="#555"/>`)}</span>
    </div>`
  }

  render() {
    return html`
      ${this.renderTitle()}
      <div class="ribbon">
        ${this.renderTabs()}
        <div class="groups">
          ${this.renderClipboard()} ${this.renderSlides()} ${this.renderFont()} ${this.renderParagraph()}
          ${this.renderDrawing()} ${this.renderEditing()} ${this.renderCommands()}
        </div>
        <span class="expand">${ico(7, 4, svg`<path d="M.5 3.5 3.5.5l3 3" stroke="#555"/>`)}</span>
      </div>
      <div class="main">
        ${this.renderRecovery()}
        <div class="thumbs"><span class="num">1</span><div class="thumb"></div></div>
        ${this.renderSlide()}
        ${this.renderPane()}
      </div>
      ${this.renderStatus()}
    `
  }
}

declare global {
  interface HTMLElementTagNameMap {
    'app-root': AppRoot
  }
}
